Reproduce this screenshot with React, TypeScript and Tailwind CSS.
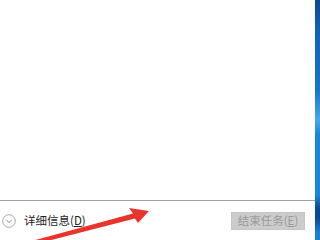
import React from "react";

export default function App() {
  return (
    <div
      className="relative flex h-[240px] w-[320px] overflow-hidden bg-white"
      style={{ fontFamily: '"Noto Sans CJK SC", "Noto Sans", sans-serif' }}
    >
      <div className="flex w-[315px] flex-col">
        <div className="h-[200px] bg-white" />
        <div className="h-px bg-[#a0a0a0]" />
        <div className="flex flex-1 items-center justify-between pl-[2px] pr-[10px]">
          <div className="flex items-center gap-[8px]">
            <svg width="14" height="14" viewBox="0 0 14 14" className="mt-[1px]">
              <circle cx="7" cy="7" r="6.3" fill="none" stroke="#a8a8a8" strokeWidth="1" />
              <path d="M4.3 5.8 L7 8.5 L9.7 5.8" fill="none" stroke="#8a8a8a" strokeWidth="1" />
            </svg>
            <span className="text-[11.5px] leading-none text-[#1e1e1e]">
              详细信息(<span className="underline">D</span>)
            </span>
          </div>
          <div className="flex h-[18px] w-[74px] items-center justify-center border border-[#c4c4c4] bg-[#cccccc]">
            <span className="text-[11.5px] leading-none text-[#9a9a9a]">
              结束任务(<span className="underline">E</span>)
            </span>
          </div>
        </div>
      </div>
      <div className="w-[5px] bg-[linear-gradient(to_bottom,#0a4a8c_0px,#0f62b2_30px,#1677c8_90px,#4aa8e4_120px,#1a86d6_135px,#1888d8_195px,#0b4a90_208px,#0b4a90_218px,#1a80d0_232px)]" />
      <svg
        className="pointer-events-none absolute left-0 top-0"
        width="320"
        height="240"
        viewBox="0 0 320 240"
      >
        <polygon
          points="28,242 133,213.5 129,208 149,211 138,223 135,218.5 28,246"
          fill="#e8342c"
        />
      </svg>
    </div>
  );
}
